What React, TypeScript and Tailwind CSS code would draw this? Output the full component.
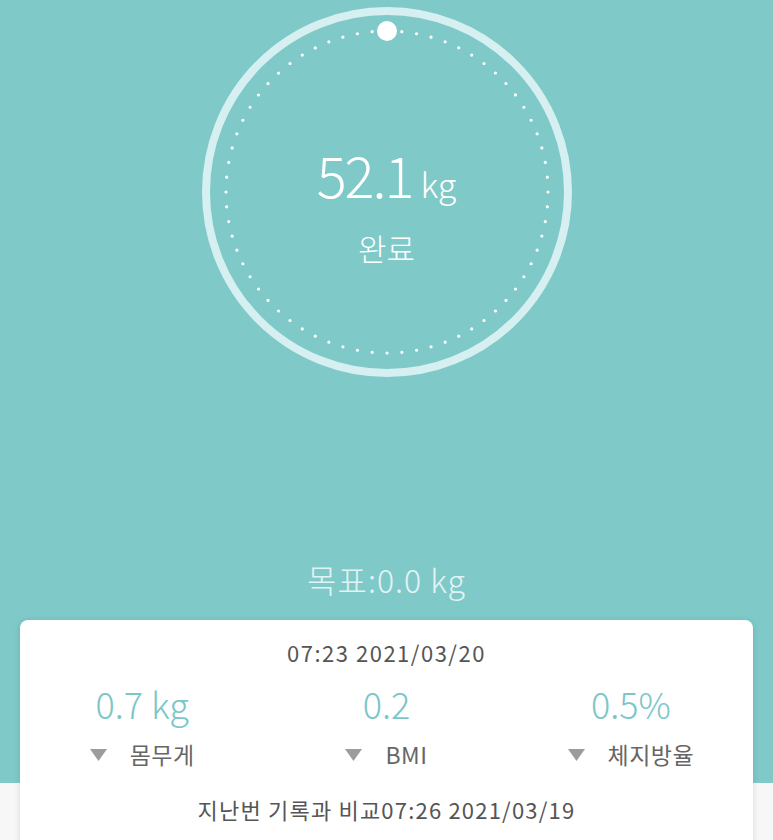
import React from 'react'

const font = { fontFamily: '"Noto Sans CJK KR", "Noto Sans", sans-serif' }

function Gauge() {
  return (
    <div className="relative mx-auto mt-[2px] h-[380px] w-[380px]">
      <svg className="absolute inset-0" width="380" height="380" viewBox="0 0 380 380">
        <circle cx="190" cy="190" r="181" fill="none" stroke="#d6eff0" strokeWidth="8" />
        <circle
          cx="190"
          cy="190"
          r="161"
          fill="none"
          stroke="#ffffff"
          strokeWidth="3.2"
          strokeLinecap="round"
          strokeDasharray="0 14.87"
        />
        <circle cx="190" cy="29" r="10" fill="#ffffff" />
      </svg>
      <div className="relative flex flex-col items-center pt-[144px] text-white">
        <div className="flex items-baseline leading-none">
          <span className="text-[56px] font-light tracking-[-2px]">52.1</span>
          <span className="ml-2 text-[34px] font-light">kg</span>
        </div>
        <div className="mt-[30px] text-[31px] font-light leading-none">완료</div>
      </div>
    </div>
  )
}

function Stat({ value, label }: { value: string; label: string }) {
  return (
    <div className="flex flex-col items-center">
      <div className="text-[36px] font-light leading-none text-[#7cc6c7]">{value}</div>
      <div className="mt-[22px] flex items-center gap-[23px] leading-none">
        <svg width="17" height="12" viewBox="0 0 17 12">
          <polygon points="0,0 17,0 8.5,12" fill="#9c9c9c" />
        </svg>
        <span className="text-[23px] tracking-[0.5px] text-[#666666]">{label}</span>
      </div>
    </div>
  )
}

export default function App() {
  return (
    <div
      className="h-[840px] w-full overflow-hidden bg-[linear-gradient(to_bottom,#7fc9c9_783px,#f7f7f7_783px)]"
      style={font}
    >
      <Gauge />
      <div className="mt-[181px] text-center text-[32px] font-light leading-none tracking-[1px] text-[#e2f3f3]">
        목표:0.0 kg
      </div>
      <div className="mx-5 mt-[25px] h-[260px] rounded-lg bg-white pt-[21px] shadow-[0_1px_6px_rgba(0,0,0,0.12)]">
        <div className="text-center text-[22px] leading-none tracking-[1.5px] text-[#555555]">07:23 2021/03/20</div>
        <div className="mt-[22px] grid grid-cols-3">
          <Stat value="0.7 kg" label="몸무게" />
          <Stat value="0.2" label="BMI" />
          <Stat value="0.5%" label="체지방율" />
        </div>
        <div className="mt-[32px] text-center text-[22px] leading-none tracking-[1.2px] text-[#555555]">
          지난번 기록과 비교07:26 2021/03/19
        </div>
      </div>
    </div>
  )
}
